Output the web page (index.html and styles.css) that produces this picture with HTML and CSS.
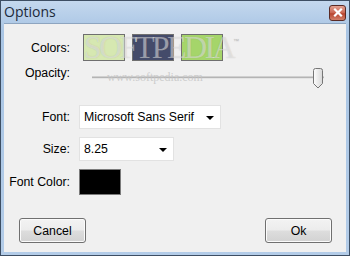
FILE: index.html
```html
<!DOCTYPE html>
<html>
<head>
<meta charset="utf-8">
<link rel="stylesheet" href="styles.css">
</head>
<body>
<div class="window">
  <div class="titlebar">
    <span class="title">Options</span>
    <div class="close">
      <svg width="10" height="9" viewBox="0 0 10 9"><path d="M2 1.5 L8 7.5 M8 1.5 L2 7.5" stroke="#ffffff" stroke-width="2.2" stroke-linecap="square"/></svg>
    </div>
  </div>
  <div class="client">
    <div class="row row-colors">
      <span class="label">Colors:</span>
      <div class="swatches">
        <div class="swatch sw1"></div>
        <div class="swatch sw2"></div>
        <div class="swatch sw3"></div>
      </div>
    </div>
    <div class="row row-opacity">
      <span class="label label-high">Opacity:</span>
      <div class="slider">
        <div class="track"></div>
        <svg class="thumb" width="12" height="21" viewBox="0 0 12 21">
          <defs><linearGradient id="tg" x1="0" y1="0" x2="1" y2="0"><stop offset="0" stop-color="#fdfdfd"/><stop offset="1" stop-color="#d8d8d8"/></linearGradient></defs>
          <path d="M1.5 2.5 Q1.5 0.5 3.5 0.5 L8.5 0.5 Q10.5 0.5 10.5 2.5 L10.5 15.5 L6 20 L1.5 15.5 Z" fill="url(#tg)" stroke="#767676" stroke-width="1"/>
        </svg>
      </div>
    </div>
    <div class="row row-font">
      <span class="label">Font:</span>
      <div class="combo combo-font"><span>Microsoft Sans Serif</span><i class="arrow"></i></div>
    </div>
    <div class="row row-size">
      <span class="label">Size:</span>
      <div class="combo combo-size"><span>8.25</span><i class="arrow"></i></div>
    </div>
    <div class="row row-fcolor">
      <span class="label">Font Color:</span>
      <div class="fontcolor"></div>
    </div>
    <div class="buttons">
      <div class="btn">Cancel</div>
      <div class="btn">Ok</div>
    </div>
    <div class="wm-big">SOFTPEDIA<sup>™</sup></div>
    <div class="wm-small">www.softpedia.com</div>
  </div>
</div>
</body>
</html>
```
FILE: styles.css
```css
html, body {
  margin: 0;
  padding: 0;
  width: 350px;
  height: 256px;
  overflow: hidden;
  background: #b7cfe9;
}
.window {
  box-sizing: border-box;
  width: 350px;
  height: 256px;
  border: 1px solid #3d4e63;
  background: linear-gradient(#c4d8ee, #a9c5e4 30px, #b3cce8);
  padding: 0 3px 3px 3px;
  display: flex;
  flex-direction: column;
  font-family: "Liberation Sans", Arial, sans-serif;
  font-size: 12.3px;
  color: #000;
}
.titlebar {
  height: 22px;
  display: flex;
  align-items: center;
  justify-content: space-between;
  flex: none;
}
.title {
  font-family: "Open Sans", "Noto Sans", sans-serif;
  font-size: 14px;
  color: #1c2a3a;
  margin-top: -1px;
}
.close {
  width: 15px;
  height: 14px;
  margin-top: 1px;
  border: 1px solid #5a2a24;
  border-radius: 3px;
  background: linear-gradient(#e3a394, #c9634f 50%, #b8442e 55%, #d2806a);
  display: flex;
  align-items: center;
  justify-content: center;
}
.close svg { display: block; }
.client {
  position: relative;
  flex: 1;
  background: #f0f0f0;
  border-top: 1px solid #8ea5c0;
  display: flex;
  flex-direction: column;
  padding-top: 10px;
  padding-bottom: 9px;
}
.row {
  display: flex;
  align-items: center;
}
.label {
  width: 66px;
  text-align: right;
  flex: none;
}
.swatches {
  display: flex;
  gap: 7px;
  margin-left: 13px;
}
.swatch {
  width: 40px;
  height: 25px;
  border: 1px solid #6f6f6f;
}
.sw1 { background: #d6e8b1; }
.sw2 { background: #444b6a; }
.sw3 { background: #a5d56a; }
.row-opacity {
  margin-top: 3px;
  height: 26px;
  align-items: flex-start;
}
.label-high { margin-top: 2px; }
.slider {
  position: relative;
  margin-left: 22px;
  width: 232px;
  height: 26px;
}
.track {
  position: absolute;
  left: 0;
  right: 0;
  top: 12px;
  height: 1px;
  background: #b4b4b4;
  border-bottom: 1px solid #e4e4e4;
  border-top: 1px solid #d0d0d0;
}
.thumb {
  position: absolute;
  left: 220px;
  top: 4px;
}
.row-font { margin-top: 15px; }
.row-size { margin-top: 8px; }
.row-fcolor { margin-top: 8px; }
.combo {
  box-sizing: border-box;
  height: 24px;
  margin-left: 9px;
  background: #fff;
  border: 1px solid #e2e2e2;
  display: flex;
  align-items: center;
  justify-content: space-between;
  padding: 0 6px 0 4px;
}
.combo-font { width: 142px; }
.combo-size { width: 95px; }
.arrow {
  width: 0;
  height: 0;
  border-left: 4px solid transparent;
  border-right: 4px solid transparent;
  border-top: 4px solid #000;
  margin-top: 2px;
}
.fontcolor {
  width: 40px;
  height: 24px;
  margin-left: 9px;
  background: #000;
  border: 1px solid #7b7b7b;
}
.buttons {
  margin-top: auto;
  display: flex;
  justify-content: space-between;
  padding: 0 14px 0 15px;
}
.btn {
  box-sizing: border-box;
  width: 67px;
  height: 25px;
  border: 1px solid #707070;
  border-radius: 3px;
  background: linear-gradient(#f3f3f3, #ececec 48%, #dddddd 52%, #d2d2d2);
  display: flex;
  align-items: center;
  justify-content: center;
  box-shadow: inset 0 0 0 1px #fbfbfb;
}
.wm-big {
  position: absolute;
  left: 80px;
  top: 5px;
  font-family: "Liberation Serif", "Times New Roman", serif;
  font-size: 32px;
  letter-spacing: -2.6px;
  color: rgba(255, 255, 255, 0.42);
  text-shadow: 0 0 1px rgba(120, 120, 120, 0.35);
  pointer-events: none;
}
.wm-big sup {
  font-family: "Liberation Sans", sans-serif;
  font-size: 6px;
  vertical-align: 15px;
  letter-spacing: 0;
  color: rgba(180, 180, 180, 0.7);
}
.wm-small {
  position: absolute;
  left: 103px;
  top: 46px;
  font-family: "Liberation Serif", serif;
  font-size: 12px;
  color: rgba(195, 195, 195, 0.8);
  pointer-events: none;
}
```
